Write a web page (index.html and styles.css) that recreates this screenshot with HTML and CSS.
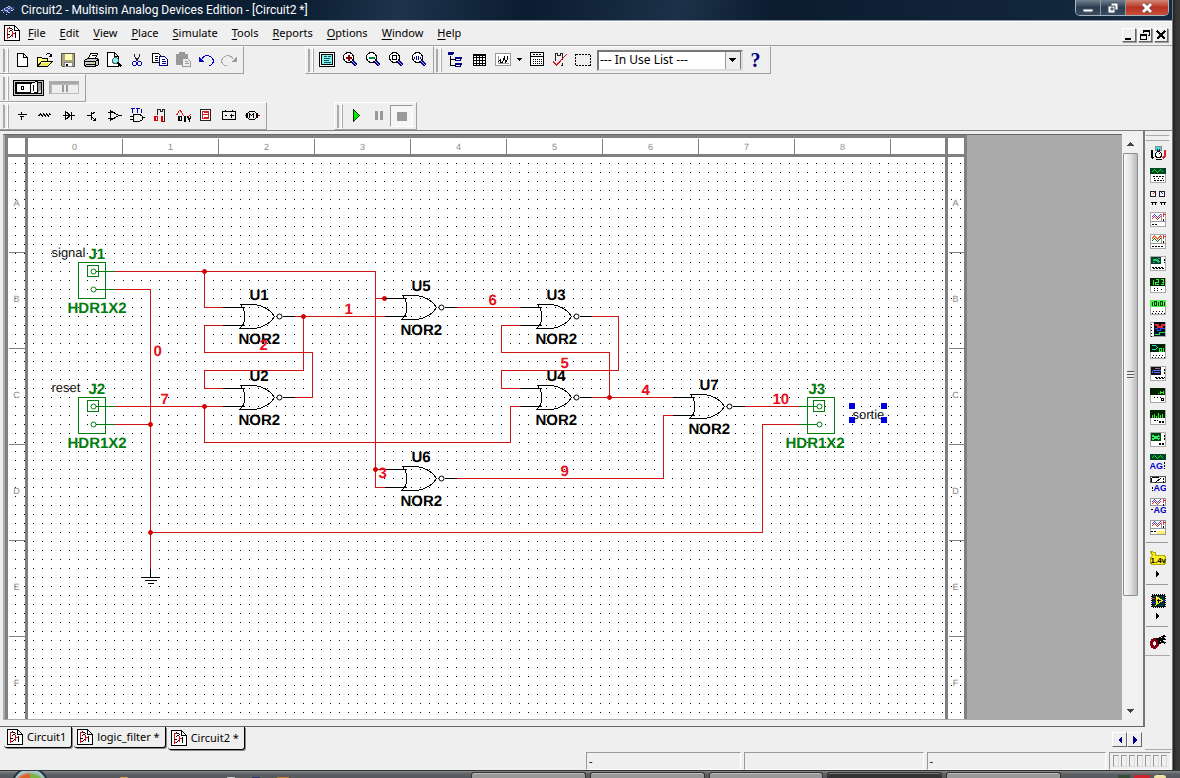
FILE: index.html
```html
<!DOCTYPE html>
<html lang="en">
<head>
<meta charset="utf-8">
<title>Circuit2 - Multisim Analog Devices Edition</title>
<link rel="stylesheet" href="styles.css">
</head>
<body>
<svg class="defs" aria-hidden="true">
  <symbol id="doc" viewBox="-.5 -.5 16 16"><path d="M0 0H10L15 5V15H0Z" fill="#fff" stroke="#000"/><path d="M10 0V5H15" fill="none" stroke="#000"/><path d="M3 2V13M3 3H5M3 12H5M8 5V11M8 8H11" fill="none" stroke="#e01010"/><path d="M5 2L8 4L5 6M2 9H5M4 13L7 10M11 6V12" fill="none" stroke="#000"/></symbol>
  <symbol id="lens" viewBox="-.5 -.5 16 16"><circle cx="6" cy="5" r="5" fill="#fff" stroke="#000"/><path d="M10 9L14 13" stroke="#000080" stroke-width="3"/><path d="M10 9L14 13" stroke="#aaf"/></symbol>
  <symbol id="inst" viewBox="-.5 -.5 16 16"><path d="M0 0H15V14H0Z" fill="#fff" stroke="#aaa"/></symbol>
  <symbol id="ports" viewBox="-.5 -.5 16 16"><path d="M2 11H14M1 13H14" stroke="#000" stroke-dasharray="1 2"/></symbol>
  <symbol id="gate" viewBox="-20 -15 78 30" overflow="visible"><path class="lead" d="M-18-9H4M-18 9H4M42 0H54"/><path class="lead" d="M0-12H14C23-11 31-6 34 0C31 6 23 11 14 12H-1L2 9C5 5 5-5 2-9Z"/><circle class="lead bubble" cx="39" cy="0" r="2.5"/></symbol>
</svg>
<div class="desktop">
<main class="window">
  <header class="titlebar">
    <svg class="logo" viewBox="0 0 16 16"><path d="M1 8L9 4L15 6L7 11Z" fill="#3b4b91"/><path d="M1 9L8 5M3 11L11 5M6 13L14 7M4 6L10 11M8 4L14 8" stroke="#b9c4ef" stroke-width="1" stroke-dasharray="2 1"/></svg>
    <h1>Circuit2 - Multisim Analog Devices Edition - [Circuit2 *]</h1>
    <div class="winctl">
      <button aria-label="Minimize"><svg viewBox="0 0 14 12"><path d="M2 7H12V10H2Z" fill="#fff" stroke="#456"/></svg></button>
      <button aria-label="Restore"><svg viewBox="0 0 14 12"><path d="M5 1H12V8H9V11H2V4H5Z" fill="#fff" stroke="#456"/><path d="M5 4H9V8M5 6H7V8H5Z" fill="none" stroke="#345"/></svg></button>
      <button class="close" aria-label="Close"><svg viewBox="0 0 14 12"><path d="M3 2L11 10M11 2L3 10" stroke="#633" stroke-width="4"/><path d="M3 2L11 10M11 2L3 10" stroke="#fff" stroke-width="3"/></svg></button>
    </div>
  </header>
  <nav class="menubar">
    <svg class="ico"><use href="#doc"/></svg>
    <button><u>F</u>ile</button><button><u>E</u>dit</button><button><u>V</u>iew</button><button><u>P</u>lace</button><button><u>S</u>imulate</button><button><u>T</u>ools</button><button><u>R</u>eports</button><button><u>O</u>ptions</button><button><u>W</u>indow</button><button><u>H</u>elp</button>
    <div class="mdi">
      <button aria-label="Minimize document"><svg viewBox="0 0 12 12"><path d="M2 9H8V11H2Z"/></svg></button>
      <button aria-label="Restore document"><svg viewBox="0 0 12 12"><path d="M4 1H11V7H9V6H10V3H5V4H4Z"/><path d="M1 5H8V11H1ZM2 7V10H7V7Z" fill-rule="evenodd"/></svg></button>
      <button aria-label="Close document"><svg viewBox="0 0 12 12"><path d="M2 2L10 10M10 2L2 10" stroke="#000" stroke-width="2"/></svg></button>
    </div>
  </nav>

  <div class="bars">
    <div class="bar standard">
      <i class="grip"></i>
      <button aria-label="New"><svg class="ico" viewBox="-.5 -.5 16 16"><path d="M3 1H9L13 5V14H3ZM9 1V5H13" fill="#fff" stroke="#000"/></svg></button>
      <button aria-label="Open"><svg class="ico" viewBox="-.5 -.5 16 16"><path d="M0 14V5H4L5 6H10V9H4Z" fill="#ffff80" stroke="#000"/><path d="M0 14L4 9H15L10 14Z" fill="#e8e860" stroke="#000"/><path d="M3 12L5 10H12" stroke="#ff9" fill="none"/><path d="M8 3L10 1H12L14 4M14 1V4H11" fill="none" stroke="#000"/></svg></button>
      <button aria-label="Save"><svg class="ico" viewBox="-.5 -.5 16 16"><path d="M1 1H14V14H2L1 13Z" fill="#aaa57c" stroke="#555"/><path d="M4 1H11V7H4Z" fill="#ffffb8"/><path d="M4 10H12V14H4Z" fill="#fff" stroke="#888"/><path d="M6 11V13" stroke="#000" stroke-width="2"/></svg></button>
      <button aria-label="Print"><svg class="ico" viewBox="-.5 -.5 16 16"><path d="M5 6L7 1H14L12 6" fill="#fff" stroke="#000"/><path d="M1 8L4 6H14L15 8V12L12 14H2L1 12Z" fill="#ccc" stroke="#000"/><path d="M1 9H12V14M2 12H11M12 9L15 7M8 3H12" fill="none" stroke="#000"/><path d="M8 11H10" stroke="#ee0"/></svg></button>
      <button aria-label="Print preview"><svg class="ico" viewBox="-.5 -.5 16 16"><path d="M1 0H8L12 4V14H1ZM8 0V4H12" fill="#fff" stroke="#000"/><circle cx="9" cy="8" r="3" fill="#8ee" stroke="#466"/><path d="M11 10L15 14" stroke="#000" stroke-width="2"/></svg></button>
      <button aria-label="Cut"><svg class="ico" viewBox="-.5 -.5 16 16"><path d="M5 1V4L9 9M10 1V4L6 9" fill="none" stroke="#223"/><circle cx="5" cy="11" r="2" fill="none" stroke="#00a"/><circle cx="10" cy="11" r="2" fill="none" stroke="#00a"/></svg></button>
      <button aria-label="Copy"><svg class="ico" viewBox="-.5 -.5 16 16"><path d="M0 1H6L8 3V10H0Z" fill="#fff" stroke="#000"/><path d="M2 4H5M2 6H5M2 8H5" stroke="#000"/><path d="M7 4H12L15 7V13H7Z" fill="#fff" stroke="#000080"/><path d="M9 7H12M9 9H13M9 11H13" stroke="#000080"/></svg></button>
      <button aria-label="Paste" disabled><svg class="ico" viewBox="-.5 -.5 16 16"><path d="M1 2H12V12H1ZM4 0H9V3H4Z" fill="#999" stroke="#999"/><path d="M7 6H12L15 9V14H7Z" fill="#eee" stroke="#999"/><path d="M9 9H12M9 11H13" stroke="#999"/></svg></button>
      <button aria-label="Undo"><svg class="ico" viewBox="-.5 -.5 16 16"><path d="M3 7C6 2 11 2 14 6C16 9 14 13 10 13" fill="none" stroke="#0000c8"/><path d="M0 4V9H5Z" fill="#00c"/></svg></button>
      <button aria-label="Redo" disabled><svg class="ico" viewBox="-.5 -.5 16 16"><path d="M12 7C9 2 4 2 1 6C-1 9 1 13 5 13" fill="none" stroke="#aaa"/><path d="M15 4V9H10Z" fill="#999"/></svg></button>
    </div>
    <div class="bar view">
      <i class="grip"></i>
      <button aria-label="Full screen"><svg class="ico" viewBox="-.5 -.5 16 16"><path d="M0 0H15V14H0Z" fill="#fff" stroke="#000"/><path d="M2 2H13V12H2Z" fill="#8ee" stroke="#000"/><path d="M4 4H7M8 4H11M4 6H10M4 8H9M4 10H11" stroke="#055"/></svg></button>
      <button aria-label="Zoom in"><svg class="ico" viewBox="-.5 -.5 16 16"><use href="#lens" x="-.5" y="-.5" width="16" height="16"/><path d="M3 5H9M6 2V8" stroke="#800000" stroke-width="2"/></svg></button>
      <button aria-label="Zoom out"><svg class="ico" viewBox="-.5 -.5 16 16"><use href="#lens" x="-.5" y="-.5" width="16" height="16"/><path d="M3 5H9" stroke="#084" stroke-width="2"/></svg></button>
      <button aria-label="Zoom area"><svg class="ico" viewBox="-.5 -.5 16 16"><use href="#lens" x="-.5" y="-.5" width="16" height="16"/><path d="M4 3H8V7H4Z" fill="#fff" stroke="#000"/></svg></button>
      <button aria-label="Zoom fit"><svg class="ico" viewBox="-.5 -.5 16 16"><use href="#lens" x="-.5" y="-.5" width="16" height="16"/><path d="M3 4V6M5 3V7M7 3V7M9 4V6" stroke="#008"/></svg></button>
    </div>
    <div class="bar main">
      <i class="grip"></i>
      <button aria-label="Design toolbox"><svg class="ico" viewBox="-.5 -.5 16 16"><path d="M3 3V13H8M3 7H8" fill="none" stroke="#000"/><path d="M1 0H5V2H1ZM8 5H13V8H8ZM8 11H13V14H8Z" fill="#fff" stroke="#000080"/><path d="M1 0H6M8 5H14M8 11H14" stroke="#000080" stroke-width="2"/></svg></button>
      <button class="wide" aria-label="Spreadsheet"><svg class="ico" viewBox="-.5 -.5 16 16"><path d="M2 2H14V13H2ZM5 2V13M8 2V13M11 2V13M2 5H14M2 8H14M2 11H14" fill="#fff" stroke="#000"/><path d="M2 2H14" stroke="#000" stroke-width="2"/></svg></button>
      <button aria-label="Grapher"><svg class="ico" viewBox="-.5 -.5 16 16"><path d="M0 1H15V13H0Z" fill="#fff" stroke="#999"/><path d="M3 3V11H13" fill="none" stroke="#999"/><path d="M2 10L5 7V10H7L9 4L10 10L12 7V3" fill="none" stroke="#000"/></svg></button>
      <button class="arrow" aria-label="Grapher options"><svg viewBox="0 0 6 4"><path d="M0 0H5L3 3H2Z"/></svg></button>
      <button aria-label="Postprocessor"><svg class="ico" viewBox="-.5 -.5 16 16"><path d="M1 0H14V13H1ZM1 4H14" fill="#fff" stroke="#000"/><path d="M3 2H12" stroke="#000" stroke-dasharray="2 1"/><path d="M3 7H13M3 9H13M3 11H13" stroke="#000" stroke-dasharray="1 1"/></svg></button>
      <button aria-label="Rules check"><svg class="ico" viewBox="-.5 -.5 16 16"><path d="M3 8V1H5V3H8V1H10V7M8 13H10V10" fill="none" stroke="#222"/><path d="M1 9L4 12L14 2M1 10L4 13L8 9" fill="none" stroke="#e01020"/></svg></button>
      <button aria-label="Selection"><svg class="ico" viewBox="-.5 -.5 16 16"><path d="M0 2H15V13H0Z" fill="none" stroke="#000" stroke-dasharray="2 1"/></svg></button>
      <select aria-label="In use list"><option>--- In Use List ---</option></select>
      <button class="help" aria-label="Help">?</button>
    </div>
  </div>
  <div class="bars">
    <div class="bar switch">
      <i class="grip"></i>
      <button aria-label="Simulation switch"><svg width="32" height="18" viewBox="0 0 32 18"><path d="M0 1H31V17H0Z"/><path d="M1 2H30V16H1Z" fill="#ccc"/><path d="M2 3H29V15H2Z"/><path d="M4 5H17V13H4Z" fill="#fff"/><path d="M17 5L24 2V13L18 15Z" fill="#fff" stroke="#000"/><path d="M8 7H11V11H8ZM9 8V10H10V8Z" fill-rule="evenodd"/><path d="M20 6H21V12H20Z"/><path d="M25 4H28V10L25 13Z" fill="#999"/><path d="M25 13L28 10V14H24Z" fill="#ddd"/></svg></button>
      <button aria-label="Pause simulation" disabled><svg width="32" height="16" viewBox="0 0 32 16"><path d="M1 1H31V4H3V14H1Z" fill="#aaa"/><path d="M3 4H30V13H3Z" fill="#eee" stroke="#bbb"/><path d="M14 5H16V12H14ZM18 5H20V12H18Z" fill="#999"/></svg></button>
    </div>
  </div>
  <div class="bars">
    <div class="bar components">
      <i class="grip"></i>
      <button aria-label="Source"><svg class="ico" viewBox="-.5 -.5 16 16"><path d="M7 3V6M3 6H12M7 8V11M5 8H9" stroke="#000"/></svg></button>
      <button aria-label="Basic"><svg class="ico" viewBox="-.5 -.5 16 16"><path d="M0 7H2L3 5L5 8L6 5L8 8L9 5L11 8L12 5L14 7" fill="none" stroke="#000"/></svg></button>
      <button aria-label="Diode"><svg class="ico" viewBox="-.5 -.5 16 16"><path d="M2 7H14M5 3V11L10 7ZM11 3V11" fill="none" stroke="#000"/></svg></button>
      <button aria-label="Transistor"><svg class="ico" viewBox="-.5 -.5 16 16"><path d="M3 7H8M8 3V11M8 6L12 3M8 8L12 12M12 9V12H9" fill="none" stroke="#000"/></svg></button>
      <button aria-label="Analog"><svg class="ico" viewBox="-.5 -.5 16 16"><path d="M4 2V12L12 7ZM1 4H6M1 10H6M12 7H15" fill="none" stroke="#000"/></svg></button>
      <button aria-label="TTL"><svg class="ico" viewBox="-.5 -.5 16 16"><path d="M1 0H5M3 0V4M6 0H10M8 0V4M12 0V4" stroke="#00a" fill="none"/><path d="M4 6H9C15 7 15 12 9 13H4ZM0 8H4M0 11H4M13 9H15" fill="none" stroke="#000"/></svg></button>
      <button aria-label="Digital"><svg class="ico" viewBox="-.5 -.5 16 16"><path d="M5 6V1H8V3H10V1H12V13H9" fill="none" stroke="#222"/><path d="M2 8H5V12H2ZM3 8V12M9 7V13M10 7V13M8 8H9" fill="none" stroke="#e00000"/></svg></button>
      <button aria-label="Mixed"><svg class="ico" viewBox="-.5 -.5 16 16"><path d="M1 7L4 2L6 3L8 8M12 9L15 6" fill="none" stroke="#e02020"/><path d="M3 8H6V12H3ZM4 8V12M9 7V13M10 7V13M12 8L14 12L15 8" fill="none" stroke="#000"/></svg></button>
      <button aria-label="Indicator"><svg class="ico" viewBox="-.5 -.5 16 16"><path d="M2 1H12V12H2Z" fill="#fff" stroke="#222"/><path d="M4 3H10V10H4ZM4 6H10M5 4H9M5 9H9" fill="none" stroke="#d02020"/></svg></button>
      <button aria-label="Power"><svg class="ico" viewBox="-.5 -.5 16 16"><path d="M1 3H14V11H1ZM4 1V3M11 1V3M3 7H5M8 7H12M10 5V9" fill="none" stroke="#000"/></svg></button>
      <button aria-label="Electromechanical"><svg class="ico" viewBox="-.5 -.5 16 16"><path d="M0 7H3M13 7H15" stroke="#a00"/><path d="M2 5H4V9H2ZM11 5H13V9H11Z" fill="none" stroke="#000"/><circle cx="7.5" cy="7" r="4.5" fill="#eee" stroke="#000"/><path d="M5 9V5L7 7L9 5V9" fill="none" stroke="#000"/></svg></button>
    </div>
    <div class="bar sim">
      <i class="grip"></i>
      <button aria-label="Run"><svg class="ico" viewBox="-.5 -.5 16 16"><path d="M5 1V13L11 7Z" fill="#0e0" stroke="#030"/></svg></button>
      <button aria-label="Pause"><svg class="ico" viewBox="0 0 16 16"><path d="M4 3H7V12H4ZM9 3H12V12H9Z" fill="#999"/></svg></button>
      <button class="pressed" aria-label="Stop"><svg class="ico" viewBox="0 0 16 16"><path d="M3 4H13V13H3Z" fill="#999"/></svg></button>
    </div>
  </div>

  <div class="content">
    <div class="left">
      <section class="workspace">
        <div class="canvas">
        <svg class="sheet" width="963" height="584" viewBox="3.5 134.5 963 584">
          <defs><pattern id="dots" x="5.5" y="0.5" width="9" height="9" patternUnits="userSpaceOnUse"><rect width="1" height="1"/></pattern></defs>
          <rect x="4" y="135" width="963" height="584" fill="#fff"/>
          <rect x="10" y="158" width="954" height="562" fill="url(#dots)"/>
          <path d="M4 136H967M4 155H967M6 136V720M26 136V720M946 136V720M965 136V720" stroke="#808080" stroke-width="3"/>
          <path class="tick" d="M122 138V153M218 138V153M314 138V153M410 138V153M506 138V153M602 138V153M698 138V153M794 138V153M890 138V153M8 252H25M8 348H25M8 444H25M8 540H25M8 636H25M948 252H964M948 348H964M948 444H964M948 540H964M948 636H964"/>
          <g class="rule"><text x="74" y="149">0</text><text x="170" y="149">1</text><text x="266" y="149">2</text><text x="362" y="149">3</text><text x="458" y="149">4</text><text x="554" y="149">5</text><text x="650" y="149">6</text><text x="746" y="149">7</text><text x="842" y="149">8</text>
          <text x="16" y="205">A</text><text x="16" y="301">B</text><text x="16" y="397">C</text><text x="16" y="493">D</text><text x="16" y="589">E</text><text x="16" y="685">F</text>
          <text x="955" y="205">A</text><text x="955" y="301">B</text><text x="955" y="397">C</text><text x="955" y="493">D</text><text x="955" y="589">E</text><text x="955" y="685">F</text></g>
          <path class="wire" d="M114 271H375V487H384M204 271V307H222M375 298H384M375 469H384M114 289H150V568M114 424H150M150 532H762V424H798M294 316H384M303 316V370H204V388H222M294 397H312V352H204V325H222M114 406H222M204 406V442H510V406H519M456 307H519M591 316H618V370H501V388H519M591 397H672M609 397V352H501V325H519M672 415H663V478H456M744 406H798"/>
          <g class="node"><circle cx="204" cy="271" r="2"/><circle cx="303" cy="316" r="2"/><circle cx="384" cy="298" r="2"/><circle cx="375" cy="469" r="2"/><circle cx="204" cy="406" r="2"/><circle cx="150" cy="424" r="2"/><circle cx="150" cy="532" r="2"/><circle cx="609" cy="397" r="2"/></g>
          <path class="lead" d="M150 568V577M141 577H159M144 580H156M147 583H153"/>
          <g class="part">
            <use href="#gate" x="220" y="301" width="78" height="30"/><text x="249" y="299">U1</text><text x="238" y="343">NOR2</text>
            <use href="#gate" x="220" y="382" width="78" height="30"/><text x="249" y="380">U2</text><text x="238" y="424">NOR2</text>
            <use href="#gate" x="382" y="292" width="78" height="30"/><text x="411" y="290">U5</text><text x="400" y="334">NOR2</text>
            <use href="#gate" x="517" y="301" width="78" height="30"/><text x="546" y="299">U3</text><text x="535" y="343">NOR2</text>
            <use href="#gate" x="517" y="382" width="78" height="30"/><text x="546" y="380">U4</text><text x="535" y="424">NOR2</text>
            <use href="#gate" x="382" y="463" width="78" height="30"/><text x="411" y="461">U6</text><text x="400" y="505">NOR2</text>
            <use href="#gate" x="670" y="391" width="78" height="30"/><text x="699" y="389">U7</text><text x="688" y="433">NOR2</text>
          </g>
          <g class="header">
            <path d="M78 262H105V298H78ZM87 265H98V276H87ZM96 271H114M96 289H114"/><circle cx="93" cy="271" r="2.5"/><circle cx="93" cy="289" r="2.5"/><text x="88" y="258">J1</text><text x="67" y="312">HDR1X2</text>
            <path d="M78 397H105V433H78ZM87 400H98V411H87ZM96 406H114M96 424H114"/><circle cx="93" cy="406" r="2.5"/><circle cx="93" cy="424" r="2.5"/><text x="88" y="393">J2</text><text x="67" y="447">HDR1X2</text>
            <path d="M807 397H834V433H807ZM813 400H824V411H813ZM798 406H816M798 424H816"/><circle cx="819" cy="406" r="2.5"/><circle cx="819" cy="424" r="2.5"/><text x="808" y="393">J3</text><text x="785" y="447">HDR1X2</text>
          </g>
          <g class="net"><text x="153" y="355">0</text><text x="344" y="313">1</text><text x="259" y="349">2</text><text x="378" y="477">3</text><text x="641" y="394">4</text><text x="560" y="367">5</text><text x="488" y="304">6</text><text x="160" y="403">7</text><text x="560" y="475">9</text><text x="772" y="403">10</text></g>
          <g class="note"><text x="51" y="256">signal</text><text x="51" y="391">reset</text><text x="852" y="418">sortie</text></g>
          <path d="M849 403H854V408H849ZM881 403H886V408H881ZM849 417H854V422H849ZM881 417H886V422H881Z" fill="#0000e0" stroke="#0000e0"/>
        </svg>
        </div>
        <div class="scroll">
          <button aria-label="Scroll up"><svg viewBox="0 0 7 4"><path d="M3 0H4L7 4H0Z" fill="#444"/></svg></button>
          <div class="thumb"><i></i></div><div class="rest"></div>
          <button aria-label="Scroll down"><svg viewBox="0 0 7 4"><path d="M0 0H7L4 4H3Z" fill="#444"/></svg></button>
        </div>
      </section>
      <div class="tabs">
        <button><svg class="ico"><use href="#doc"/></svg>Circuit1</button>
        <button><svg class="ico"><use href="#doc"/></svg>logic_filter *</button>
        <button class="active"><svg class="ico"><use href="#doc"/></svg>Circuit2 *</button>
        <div class="tabnav"><button aria-label="Previous tab"><svg viewBox="0 0 4 8"><path d="M4 0V8L0 4Z"/></svg></button><button aria-label="Next tab"><svg viewBox="0 0 4 8"><path d="M0 0V8L4 4Z"/></svg></button></div>
      </div>
    </div>
    <aside class="instruments">
      <i class="hgrip"></i>
      <button aria-label="Multimeter"><svg class="ico" viewBox="-.5 -.5 16 16"><path d="M5 0H11V4H5Z" fill="#4dd" stroke="#888"/><path d="M1 3V10L3 12" fill="none" stroke="#000" stroke-width="2"/><path d="M14 3V10L12 12" fill="none" stroke="#d22" stroke-width="2"/><path d="M7 2V4M9 2V4" stroke="#024"/><circle cx="8" cy="8" r="3" fill="#fff" stroke="#000"/><path d="M8 8L10 6M5 13H11" stroke="#000"/></svg></button>
      <button aria-label="Function generator"><svg class="ico" viewBox="-.5 -.5 16 16"><use href="#inst" x="-.5" y="-.5" width="16" height="16"/><path d="M0 0H15V5H0Z" fill="#042" stroke="#042"/><path d="M1 4L4 1L7 4L10 1L13 4" fill="none" stroke="#0d3"/><path d="M2 8H14M3 12H13" stroke="#000" stroke-dasharray="2 1"/><path d="M3 10H14" stroke="#000" stroke-dasharray="1 3"/></svg></button>
      <button aria-label="Wattmeter"><svg class="ico" viewBox="-.5 -.5 16 16"><path d="M0 1H5V6H0ZM9 1H14V6H9Z" fill="#fff" stroke="#222"/><path d="M2 4L4 2" stroke="#e33"/><path d="M11 2L13 4" stroke="#33e"/><path d="M0 12H6M9 12H15M2 11V14M5 11V14M11 11V14M14 11V14" stroke="#000"/></svg></button>
      <button aria-label="Oscilloscope"><svg class="ico" viewBox="-.5 -.5 16 16"><use href="#inst" x="-.5" y="-.5" width="16" height="16"/><path d="M1 5L4 2L7 5L10 2" fill="none" stroke="#44d"/><path d="M1 7L4 4L7 7L10 4M13 0V4M12 2H15" fill="none" stroke="#d33"/><path d="M0 9H15M11 1V9" stroke="#999"/><path d="M1 12H6M13 6V8" stroke="#000" stroke-dasharray="2 1"/></svg></button>
      <button aria-label="Four channel oscilloscope"><svg class="ico" viewBox="-.5 -.5 16 16"><use href="#inst" x="-.5" y="-.5" width="16" height="16"/><path d="M1 4L4 1L7 4L10 1M1 5L4 2L7 5L10 2" fill="none" stroke="#e63"/><path d="M1 7L4 4L7 7L10 4" fill="none" stroke="#161"/><path d="M0 9H15M11 1V9" stroke="#999"/><path d="M13 0V4M12 2H15" stroke="#d33"/><path d="M1 12H13M13 6V8" stroke="#000" stroke-dasharray="2 1"/></svg></button>
      <button aria-label="Bode plotter"><svg class="ico" viewBox="-.5 -.5 16 16"><use href="#inst" x="-.5" y="-.5" width="16" height="16"/><path d="M1 1H10V7H1Z" fill="#042" stroke="#042"/><path d="M2 3H6L9 6" fill="none" stroke="#2c7" stroke-width="2"/><path d="M7 2H9M2 6H4" stroke="#57e"/><path d="M1 11H13M2 12H13M14 2V6" stroke="#000" stroke-dasharray="2 1"/></svg></button>
      <button aria-label="Frequency counter"><svg class="ico" viewBox="-.5 -.5 16 16"><use href="#inst" x="-.5" y="-.5" width="16" height="16"/><path d="M0 0H14V7H0Z" fill="#020" stroke="#020"/><path d="M3 1V6M5 1H8V4H5V6H8M10 1H13V6H10M11 4H13" fill="none" stroke="#3e3"/><path d="M3 10H8M3 12H7M10 11H12" stroke="#000" stroke-dasharray="1 2"/></svg></button>
      <button aria-label="Word generator"><svg class="ico" viewBox="-.5 -.5 16 16"><use href="#inst" x="-.5" y="-.5" width="16" height="16"/><path d="M0 0H15V6H0Z" fill="#5e5" stroke="#5e5"/><path d="M2 1V5M4 1H6V5H4ZM8 1V5M10 1H12V5H10ZM14 1V5" fill="none" stroke="#040"/><use href="#ports" x="-.5" y="-.5" width="16" height="16"/></svg></button>
      <button aria-label="Logic analyzer"><svg class="ico" viewBox="-.5 -.5 16 16"><use href="#inst" x="-.5" y="-.5" width="16" height="16"/><path d="M4 0H14V13H4Z" fill="#012" stroke="#012"/><path d="M4 2H7V4H11V2H14" fill="none" stroke="#e22" stroke-width="2"/><path d="M4 6H7V8H10V6H14" fill="none" stroke="#34f"/><path d="M4 12H9V10H14" fill="none" stroke="#2d4"/><path d="M1 1V14" stroke="#000" stroke-dasharray="1 2"/></svg></button>
      <button aria-label="Logic converter"><svg class="ico" viewBox="-.5 -.5 16 16"><use href="#inst" x="-.5" y="-.5" width="16" height="16"/><path d="M0 0H14V7H0Z" fill="#020" stroke="#020"/><path d="M1 1H5L7 3L5 5H1" fill="none" stroke="#3dd"/><path d="M9 4V7H11V4ZM13 3V7" fill="none" stroke="#3e3"/><use href="#ports" x="-.5" y="-.5" width="16" height="16"/></svg></button>
      <button aria-label="IV analyzer"><svg class="ico" viewBox="-.5 -.5 16 16"><use href="#inst" x="-.5" y="-.5" width="16" height="16"/><path d="M1 1H10V8H1Z" fill="#112" stroke="#112"/><path d="M1 7L3 4H10M3 6H9" fill="none" stroke="#57e"/><path d="M4 2H9" stroke="#a66"/><path d="M4 11H14M5 12H14M14 2V8" stroke="#000" stroke-dasharray="2 1"/></svg></button>
      <button aria-label="Distortion analyzer"><svg class="ico" viewBox="-.5 -.5 16 16"><use href="#inst" x="-.5" y="-.5" width="16" height="16"/><path d="M0 0H14V6H0Z" fill="#020" stroke="#020"/><path d="M7 5H8M10 2V5M13 2V5M10 4H13" stroke="#3e3"/><path d="M3 9H10" stroke="#000" stroke-dasharray="1 2"/><path d="M11 10H13V12H11Z" fill="none" stroke="#000"/></svg></button>
      <button aria-label="Spectrum analyzer"><svg class="ico" viewBox="-.5 -.5 16 16"><use href="#inst" x="-.5" y="-.5" width="16" height="16"/><path d="M0 0H14V7H0Z" fill="#020" stroke="#020"/><path d="M2 4V7M4 3V7M6 5V7M8 2V7M10 4V7M12 3V7" stroke="#3e3"/><path d="M8 12H14M8 11H13M3 10H7" stroke="#000" stroke-dasharray="2 1"/></svg></button>
      <button aria-label="Network analyzer"><svg class="ico" viewBox="-.5 -.5 16 16"><use href="#inst" x="-.5" y="-.5" width="16" height="16"/><path d="M1 1H10V8H1Z" fill="#041" stroke="#041"/><path d="M2 3L5 5L2 7M9 3L6 5L9 7" fill="none" stroke="#3e6" stroke-width="2"/><path d="M8 12H13M8 11H13M14 2V8" stroke="#000" stroke-dasharray="2 1"/></svg></button>
      <button aria-label="Agilent function generator"><svg class="ico" viewBox="-.5 -.5 16 16"><path d="M0 0H15V5H0Z" fill="#042" stroke="#042"/><path d="M1 4L4 1L7 4L10 1L13 4" fill="none" stroke="#0d3"/><path d="M14 7V14" stroke="#000" stroke-dasharray="2 1"/><text class="ag" x="-1" y="14">AG</text></svg></button>
      <button aria-label="Agilent multimeter"><svg class="ico" viewBox="-.5 -.5 16 16"><path d="M0 0H15V6H0Z" fill="#fff" stroke="#555"/><path d="M1 1H8M1 1V5M5 6L11 1" fill="none" stroke="#000"/><path d="M13 1V6M2 10V14" stroke="#000" stroke-dasharray="2 1"/><text class="ag" x="3" y="14">AG</text></svg></button>
      <button aria-label="Agilent oscilloscope"><svg class="ico" viewBox="-.5 -.5 16 16"><path d="M0 0H15V7H0Z" fill="#fff" stroke="#999"/><path d="M1 4L4 1L7 4L10 1" fill="none" stroke="#44d"/><path d="M1 6L4 3L7 6L10 3M13 0V4M12 2H15" fill="none" stroke="#d33"/><path d="M0 11H3M13 5V7" stroke="#000" stroke-dasharray="2 1"/><text class="ag" x="3" y="14">AG</text></svg></button>
      <button aria-label="Tektronix oscilloscope"><svg class="ico" viewBox="-.5 -.5 16 16"><path d="M0 0H15V14H0Z" fill="#fff" stroke="#999"/><path d="M1 4L4 1L7 4L10 1" fill="none" stroke="#44d"/><path d="M1 6L4 3L7 6L10 3M13 0V4M12 2H15" fill="none" stroke="#d33"/><path d="M0 8H15M11 1V8" stroke="#999"/><path d="M0 11H5M13 5V7" stroke="#000" stroke-dasharray="2 1"/><path d="M6 10H14V13H6Z" fill="#fe6"/></svg></button>
      <hr>
      <button class="more" aria-label="Measurement probe"><svg class="ico" viewBox="-.5 -.5 16 16"><path d="M0 0L5 1V4H14L15 6V12L13 13H1L0 11V6L2 4Z" fill="#fe2" stroke="#aa0"/><text class="volt" x="0" y="11">1.4v</text></svg><svg class="tri" viewBox="0 0 4 6"><path d="M0 0L3 3L0 6Z"/></svg></button>
      <hr>
      <button class="more" aria-label="LabVIEW instrument"><svg class="ico" viewBox="-.5 -.5 16 16"><path d="M1 1H14V13H1Z" fill="#022" stroke="#000" stroke-width="2" stroke-dasharray="1 1"/><path d="M2 2H13V12H2Z" fill="#033"/><path d="M5 2V12L13 7Z" fill="#fe2"/><path d="M6 7H10M8 5V9" stroke="#000"/><path d="M0 5H4" stroke="#e22"/><path d="M0 9H4M12 7H15" stroke="#22e"/></svg><svg class="tri" viewBox="0 0 4 6"><path d="M0 0L3 3L0 6Z"/></svg></button>
      <hr>
      <button class="probe" aria-label="Current probe"><svg class="ico" viewBox="-.5 -.5 16 16"><ellipse cx="4" cy="8" rx="3" ry="4" fill="none" stroke="#800010" stroke-width="3"/><path d="M6 4L11 2L15 0M9 5L15 3M9 8L12 6L15 8M8 4V8" fill="none" stroke="#000" stroke-width="2"/></svg></button>
    </aside>
  </div>
  <footer class="status"><span>-</span><span></span><span>-</span><div class="cells"><i></i><i></i><i></i><i></i><i></i><i></i><i></i></div></footer>
</main>
<div class="edge"></div>
</div>
<div class="taskbar"><button class="orb" aria-label="Start"></button><div class="quick"><i></i><i></i><i></i><i></i></div><div class="tasks"><i></i><i></i><i></i><i class="on"></i><i></i></div><div class="tray"><i></i><i></i><i></i></div></div>
</body>
</html>
```
FILE: styles.css
```css
* { box-sizing: border-box; }
body { margin: 0; height: 100vh; display: flex; flex-direction: column; overflow: hidden; background: #222; color: #000; font: 11px/16px "Noto Sans", sans-serif; }
button { font: inherit; color: inherit; background: none; border: 0; padding: 0; margin: 0; display: flex; align-items: center; justify-content: center; flex: none; }
svg { display: block; flex: none; shape-rendering: crispEdges; }
.defs { position: absolute; width: 0; height: 0; }
.ico { width: 16px; height: 16px; }
.desktop { flex: 1; min-height: 0; display: flex; }
.window { flex: 1; min-width: 0; display: flex; flex-direction: column; background: #efefef; }
.edge { width: 8px; background: linear-gradient(90deg, #222, #333 40%, #3a3a3a); border-left: 1px solid #777; }

.titlebar { height: 21px; display: flex; align-items: center; background: linear-gradient(100deg, #12293f, #0a1c30 25%, #1e344c 34%, #0a1c30 45%, #1c3148 58%, #0b1c30 66%, #152a40); border-bottom: 1px solid #8d99a5; }
.logo { width: 16px; height: 16px; }
.titlebar h1 { margin: 0 auto 0 5px; font: 12px/18px Roboto, sans-serif; color: #fff; white-space: nowrap; }
.winctl { align-self: flex-start; display: flex; height: 16px; margin-right: 3px; border: 1px solid #a9b6c2; border-top: 0; border-radius: 0 0 5px 5px; overflow: hidden; }
.winctl button { width: 25px; background: linear-gradient(#73818f, #2b3d50 50%, #3b4e61); border-right: 1px solid #8a98a5; }
.winctl .close { width: 42px; border: 0; background: linear-gradient(#d08878, #b83222 50%, #c8503c); }
.winctl svg { width: 14px; height: 12px; shape-rendering: auto; }

.menubar { height: 25px; display: flex; align-items: center; padding: 0 0 1px 4px; border-top: 1px solid #fff; border-bottom: 1px solid #a0a0a0; }
.menubar > button { margin-left: 14px; display: block; }
.menubar > .ico + button { margin-left: 8px; }
.menubar u { text-underline-offset: 2px; }
.mdi { display: flex; gap: 2px; margin: 4px 4px 0 auto; }
.mdi button { width: 14px; height: 14px; border: 1px solid; border-color: #fff #666 #666 #fff; box-shadow: 1px 1px 0 #999; }
.mdi svg { width: 12px; height: 12px; }

.bars { height: 28px; display: flex; }
.bar { display: flex; align-items: center; padding-left: 3px; border-right: 1px solid #a0a0a0; border-bottom: 1px solid #a0a0a0; border-top: 1px solid #fff; }
.bar > button { width: 23px; height: 22px; }
.grip, .hgrip { flex: none; border: 1px solid; border-color: #fff #aaa; box-shadow: inset 1px 0 #aaa, inset -1px 0 #fff; width: 6px; height: 25px; margin-right: 1px; }
.standard { width: 244px; }
.view { width: 129px; margin-left: 61px; padding-left: 2px; border-left: 1px solid #fff; }
.main { padding-left: 2px; width: 337px; }
.main .wide { width: 25px; }
.main .arrow { width: 11px; }
.main .arrow svg { width: 6px; height: 4px; }
.main select { width: 146px; height: 21px; margin: 0 0 0 3px; padding: 0 18px 0 1px; border: 2px solid; border-color: #777 #ddd #ddd #777; appearance: none; font: 12px/16px "Noto Sans", sans-serif; border-radius: 0; color: #000; background: linear-gradient(#000, #000) right 5px top 6px / 7px 1px no-repeat, linear-gradient(#000, #000) right 6px top 7px / 5px 1px no-repeat, linear-gradient(#000, #000) right 7px top 8px / 3px 1px no-repeat, linear-gradient(#000, #000) right 8px top 9px / 1px 1px no-repeat, linear-gradient(90deg, #999 1px, #eee 1px 15px, #777 15px) right / 16px 100% no-repeat, #fff; }
.main .help { color: #000080; font: bold 20px/20px "Liberation Serif", serif; margin-left: 1px; }
.switch { width: 86px; gap: 3px; }
.switch > button { width: 32px; }
.components { width: 267px; }
.sim { width: 83px; margin-left: 67px; padding-left: 2px; border-left: 1px solid #fff; }
.sim .pressed { border: 1px solid; border-color: #999 #fff #fff #999; background: #f6f6f6; }

.content { flex: 1; min-height: 0; display: flex; border-top: 1px solid #808080; }
.left { flex: 1; min-width: 0; display: flex; flex-direction: column; }
.workspace { flex: 1; min-height: 0; display: flex; padding: 3px 4px 6px 3px; border-right: 2px solid #777; border-bottom: 1px solid #666; }
.canvas { flex: 1; min-width: 0; overflow: hidden; background: #aaa; border-top: 1px solid #666; border-left: 1px solid #aaa; }
.sheet text { font-family: "Liberation Sans", sans-serif; text-rendering: geometricPrecision; }
.tick { stroke: #808080; fill: none; }
.rule text { font-size: 9px; fill: #888; text-anchor: middle; }
.wire { fill: none; stroke: #cf1212; }
.node { fill: #d80000; shape-rendering: geometricPrecision; }
.node circle { stroke: #d80000; }
.lead { fill: none; stroke: #000; }
.bubble { shape-rendering: geometricPrecision; }
.part text { font-size: 15px; font-weight: bold; }
.header path { fill: none; stroke: #007d0c; }
.header circle { fill: #fff; stroke: #007d0c; shape-rendering: geometricPrecision; }
.header text { font-size: 15px; font-weight: bold; fill: #007d0c; }
.net text { font-size: 15px; font-weight: bold; fill: #e8101c; }
.note text { font-size: 13px; fill: #111; }

.scroll { width: 17px; display: flex; flex-direction: column; background: #f1f1f1; }
.scroll button { height: 19px; }
.scroll svg { width: 7px; height: 4px; }
.thumb { flex: 443; margin: 0 1px; border: 1px solid #8e8e8e; border-radius: 1px; background: linear-gradient(90deg, #fafafa, #e2e2e4 50%, #b9b9bd); display: flex; align-items: center; justify-content: center; }
.thumb i { width: 7px; height: 8px; background: repeating-linear-gradient(#555 0 1px, #eee 1px 3px); }
.rest { flex: 105; }

.tabs { height: 25px; display: flex; align-items: flex-start; padding-left: 4px; }
.tabs > button { height: 21px; padding: 0 5px 0 3px; gap: 4px; border: solid #000; border-width: 0 1px 1px 0; border-radius: 0 0 3px 3px; box-shadow: 1px 1px 0 #888; white-space: nowrap; }
.tabs > button + button { margin-left: 2px; }
.tabs > .active { height: 23px; }
.tabnav { display: flex; margin: 5px 3px 0 auto; }
.tabnav button { width: 15px; height: 15px; border: 1px solid; border-color: #fff #666 #666 #fff; }
.tabnav svg { width: 4px; height: 8px; fill: #000080; }

.instruments { width: 27px; align-self: stretch; display: flex; flex-direction: column; align-items: flex-start; border-bottom: 1px solid #aaa; margin-bottom: 2px; }
.hgrip { width: 25px; height: 6px; margin: 4px 0 2px; border-color: #aaa #fff; box-shadow: none; }
.instruments button { width: 25px; height: 22px; }
.instruments hr { width: 22px; margin: 3px 1px; border: 0; border-top: 1px solid #999; }
.instruments .more { flex-direction: column; gap: 4px; height: 35px; }
.instruments .probe { height: 26px; border-bottom: 1px solid #aaa; }
.tri { width: 4px; height: 6px; }
.ag { font: bold 9px "Liberation Sans", sans-serif; fill: #00c; }
.volt { font: bold 8px "Liberation Sans", sans-serif; }

.status { height: 18px; display: flex; gap: 3px; padding-left: 586px; padding-right: 1px; }
.status span { flex: 1; padding-left: 2px; border: 1px solid; border-color: #999 #fff #fff #999; }
.status span:first-child { flex: 0 0 155px; }
.cells { width: 62px; display: flex; gap: 2px; padding: 2px 3px; border: 1px solid; border-color: #999 #fff #fff #999; }
.cells i { flex: 1; border: 1px solid; border-color: #999 #ddd #ddd #999; }

.taskbar { height: 8px; display: flex; overflow: hidden; border-top: 1px solid #333; background: linear-gradient(#888, #5c6064 3px, #55595d); }
.orb { width: 38px; height: 38px; margin: -4px 0 0 11px; border-radius: 50%; border: 2px solid #233845; background: conic-gradient(from 0deg at 50% 42%, #7cb342 0 90deg, #4a90c8 90deg 270deg, #e0602a 270deg); box-shadow: inset 0 4px 2px #a8c8dc; align-self: flex-start; }
.quick { display: flex; gap: 17px; width: 422px; padding: 6px 0 0 71px; }
.quick i { width: 8px; background: #d8a840; border-radius: 4px 4px 0 0; }
.quick i:nth-child(2) { margin-left: 82px; background: #ccc; }
.quick i:nth-child(3) { background: #2a2a80; }
.quick i:nth-child(4) { background: #c47a20; width: 12px; }
.tasks { flex: 0 1 590px; display: flex; gap: 4px; padding-top: 1px; }
.tasks i { flex: 1; border: 1px solid #333; border-bottom: 0; border-radius: 3px 3px 0 0; background: #999; box-shadow: inset 0 1px #bbb; }
.tasks .on { background: #333; box-shadow: inset 0 1px #777; }
.tray { display: flex; gap: 4px; margin: 4px 14px 0 auto; }
.tray i { width: 12px; background: #354b35; }
.tray i:nth-child(2) { width: 16px; background: #d2202c; }
.tray i:nth-child(3) { background: #eee0a0; border-radius: 6px 6px 0 0; }
```
